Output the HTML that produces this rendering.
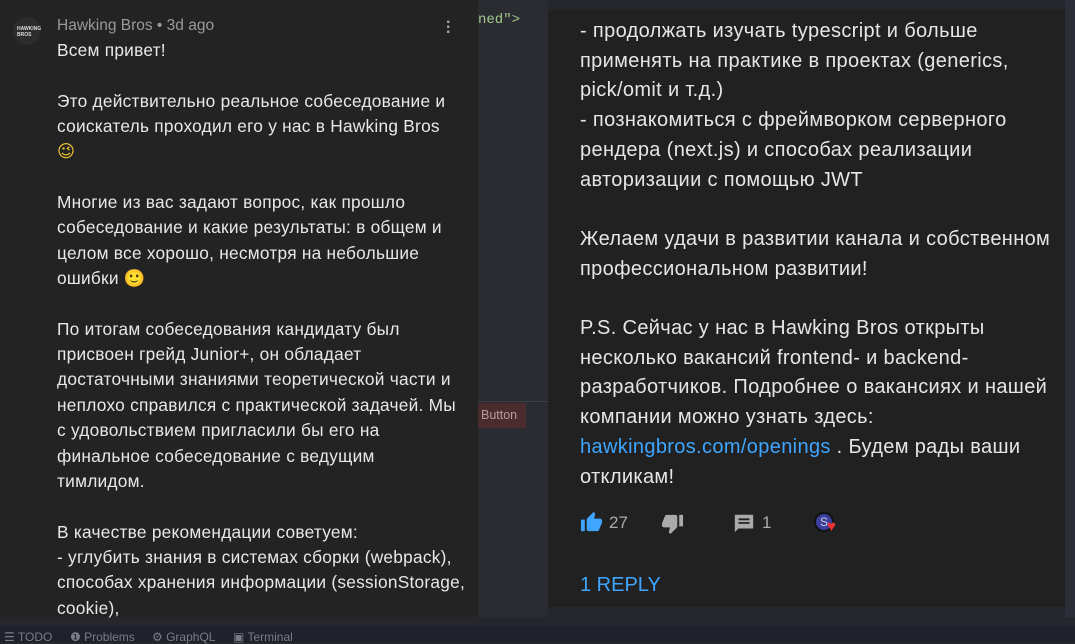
<!DOCTYPE html>
<html><head><meta charset="utf-8"><style>
*{margin:0;padding:0;box-sizing:border-box}
body{width:1075px;height:642px;overflow:hidden;background:#25272d;font-family:"Liberation Sans","DejaVu Sans",sans-serif;position:relative}
.left{position:absolute;left:0;top:0;width:478px;height:617px;background:#232323}
.right{position:absolute;left:548px;top:10px;width:517px;height:597px;background:#212121}
.ide{position:absolute;left:478px;top:0;width:70px;height:617px;background:#2a2c32}
.ide2{position:absolute;left:1065px;top:0;width:10px;height:617px;background:#2b2e36}
.lt{position:absolute;left:57px;top:38px;color:#e8e8e8;font-size:17.3px;letter-spacing:0.25px;line-height:25.35px;white-space:nowrap}
.rt{position:absolute;left:580px;top:17px;color:#e6e6e6;font-size:20px;letter-spacing:0.35px;line-height:29.7px;white-space:nowrap}
.hdr{position:absolute;left:57px;top:17px;color:#9a9a9a;font-size:15.5px}
.av{position:absolute;left:13px;top:17px;width:28px;height:28px;border-radius:50%;background:#2c2c2c;color:#ddd;font-size:5px;font-weight:bold;padding:9px 0 0 4px;line-height:6px}
.bar{position:absolute;left:0;top:625px;width:1075px;height:17px;background:#1f222a;color:#7a7d85;font-size:12px}
.bar span{position:absolute;top:5px}
a{color:#3ea6ff;text-decoration:none}
.act{position:absolute;top:513px;color:#aaa;font-size:17px}
.em{color:#f3c530}
</style></head><body>
<div class="ide"><div style="position:absolute;left:0;top:12px;color:#a5c98a;font-family:'Liberation Mono',monospace;font-size:14px">ned"&gt;</div>
<div style="position:absolute;left:0;top:401px;width:70px;height:1px;background:#3a3d44"></div>
<div style="position:absolute;left:0;top:403px;width:48px;height:25px;background:#4a2c2e;color:#b99;font-size:12.5px;padding:5px 0 0 3px">Button</div></div>
<div class="ide2"></div>
<div class="left">
<div class="av">HAWKING<br>BROS</div>
<div class="hdr">Hawking Bros • 3d ago</div>
<div style="position:absolute;left:446px;top:20px;width:4px;height:16px;color:#aaa;font-size:16px;line-height:5px;font-weight:bold">·<br>·<br>·</div>
<div class="lt">Всем привет!<br><br>Это действительно реальное собеседование и<br>соискатель проходил его у нас в Hawking Bros<br><span class="em">😉</span><br><br>Многие из вас задают вопрос, как прошло<br>собеседование и какие результаты: в общем и<br>целом все хорошо, несмотря на небольшие<br>ошибки <span class="em">🙂</span><br><br>По итогам собеседования кандидату был<br>присвоен грейд Junior+, он обладает<br>достаточными знаниями теоретической части и<br>неплохо справился с практической задачей. Мы<br>с удовольствием пригласили бы его на<br>финальное собеседование с ведущим<br>тимлидом.<br><br>В качестве рекомендации советуем:<br>- углубить знания в системах сборки (webpack),<br>способах хранения информации (sessionStorage,<br>cookie),</div>
</div>
<div class="right"></div>
<div class="rt">- продолжать изучать typescript и больше<br>применять на практике в проектах (generics,<br>pick/omit и т.д.)<br>- познакомиться с фреймворком серверного<br>рендера (next.js) и способах реализации<br>авторизации с помощью JWT<br><br>Желаем удачи в развитии канала и собственном<br>профессиональном развитии!<br><br>P.S. Сейчас у нас в Hawking Bros открыты<br>несколько вакансий frontend- и backend-<br>разработчиков. Подробнее о вакансиях и нашей<br>компании можно узнать здесь:<br><a>hawkingbros.com/openings</a> . Будем рады ваши<br>откликам!</div>
<svg style="position:absolute;left:580px;top:511px" width="23" height="23" viewBox="0 0 24 24"><path fill="#3ea6ff" d="M1 21h4V9H1v12zm22-11c0-1.1-.9-2-2-2h-6.3l1-4.6v-.3c0-.4-.2-.8-.4-1.1L14.2 1 7.6 7.6C7.2 7.9 7 8.4 7 9v10c0 1.1.9 2 2 2h9c.8 0 1.5-.5 1.8-1.2l3-7.1c.1-.2.2-.5.2-.7v-2z"/></svg>
<div class="act" style="left:609px">27</div>
<svg style="position:absolute;left:661px;top:512px" width="23" height="23" viewBox="0 0 24 24"><path fill="#aaa" d="M15 3H6c-.8 0-1.5.5-1.8 1.2l-3 7.1c-.1.2-.2.5-.2.7v2c0 1.1.9 2 2 2h6.3l-1 4.6v.3c0 .4.2.8.4 1.1L9.8 23l6.6-6.6c.4-.4.6-.9.6-1.4V5c0-1.1-.9-2-2-2zm4 0v12h4V3h-4z"/></svg>
<svg style="position:absolute;left:733px;top:512px" width="22" height="22" viewBox="0 0 24 24"><path fill="#aaa" d="M2 3h20v15H6l-4 4zM6 7h12v2H6zm0 4h12v2H6z" fill-rule="evenodd"/></svg>
<div class="act" style="left:762px">1</div>
<div style="position:absolute;left:814px;top:512px;width:20px;height:20px;border-radius:50%;background:#3b3f9e;border:2px solid #111;color:#ccd;font-size:12px;text-align:center;line-height:16px">S</div>
<div style="position:absolute;left:827px;top:518px;color:#e33;font-size:15px">♥</div>
<div style="position:absolute;left:580px;top:574px;color:#3ea6ff;font-size:20px">1 REPLY</div>
<div class="bar"><span style="left:4px">☰ TODO</span><span style="left:70px">❶ Problems</span><span style="left:152px">⚙ GraphQL</span><span style="left:233px">▣ Terminal</span></div>
</body></html>
